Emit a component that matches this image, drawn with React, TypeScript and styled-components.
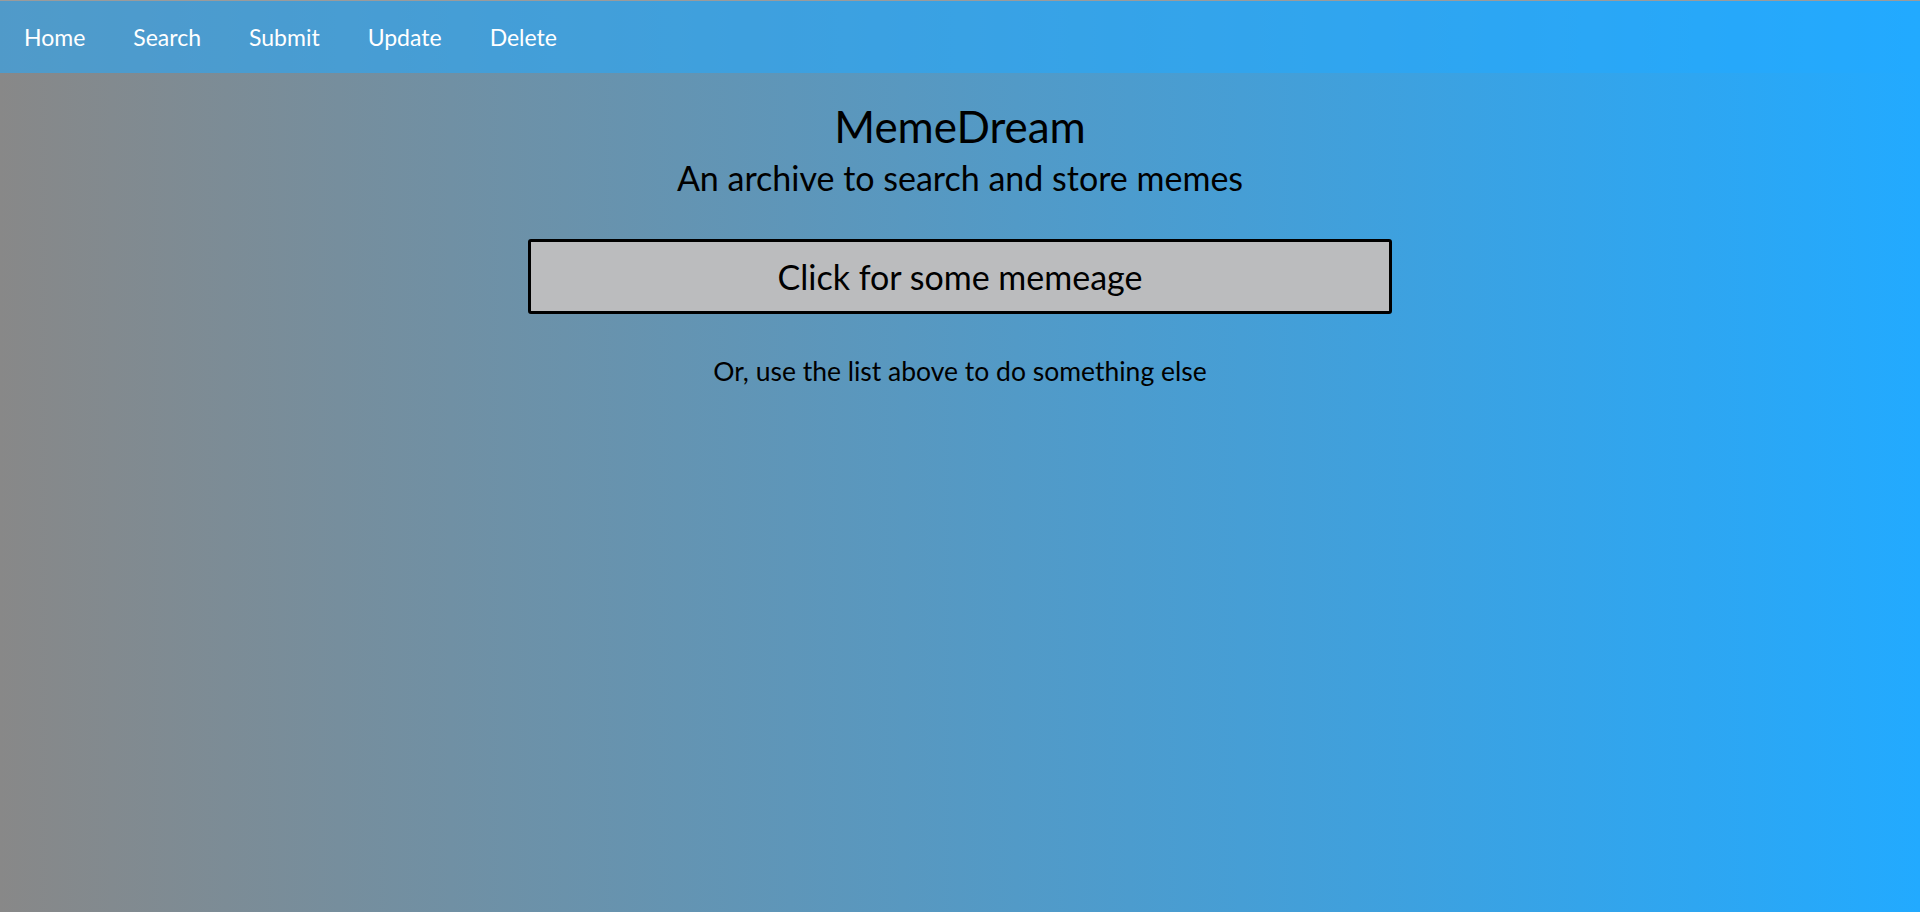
import React from "react";
import styled, { createGlobalStyle } from "styled-components";

const GlobalStyle = createGlobalStyle`
  html, body {
    margin: 0;
    padding: 0;
    height: 100%;
  }
  body {
    font-family: "Lato", "Liberation Sans", sans-serif;
    background: #9b9b9b;
  }
  #root {
    height: 100%;
  }
`;

const Page = styled.div`
  box-sizing: border-box;
  min-height: 100vh;
  border-top: 1px solid #9b9b9b;
  background: linear-gradient(to right, #888888, #22aaff);
  display: flex;
  flex-direction: column;
`;

const NavBar = styled.nav`
  height: 72px;
  display: flex;
  align-items: center;
  background: rgba(34, 170, 255, 0.55);
`;

const NavLink = styled.a`
  padding: 0 24px;
  color: #ffffff;
  font-size: 23px;
  text-decoration: none;
  cursor: pointer;
`;

const Main = styled.main`
  display: flex;
  flex-direction: column;
  align-items: center;
  color: #000000;
`;

const Title = styled.h1`
  margin: 27px 0 0;
  font-size: 44px;
  font-weight: normal;
  line-height: 1.2;
`;

const Subtitle = styled.h2`
  margin: 5px 0 0;
  font-size: 34px;
  font-weight: normal;
  line-height: 1.2;
`;

const MemeButton = styled.button`
  box-sizing: border-box;
  margin-top: 40px;
  width: 45%;
  height: 75px;
  background: #bbbcbe;
  border: 3px solid #000000;
  border-radius: 3px;
  font-family: inherit;
  font-size: 34px;
  color: #000000;
  cursor: pointer;
`;

const Hint = styled.p`
  margin: 42px 0 0;
  font-size: 26.5px;
  line-height: 1.2;
`;

const links = ["Home", "Search", "Submit", "Update", "Delete"];

export default function App() {
  return (
    <>
      <GlobalStyle />
      <Page>
        <NavBar>
          {links.map((l) => (
            <NavLink key={l}>{l}</NavLink>
          ))}
        </NavBar>
        <Main>
          <Title>MemeDream</Title>
          <Subtitle>An archive to search and store memes</Subtitle>
          <MemeButton>Click for some memeage</MemeButton>
          <Hint>Or, use the list above to do something else</Hint>
        </Main>
      </Page>
    </>
  );
}
